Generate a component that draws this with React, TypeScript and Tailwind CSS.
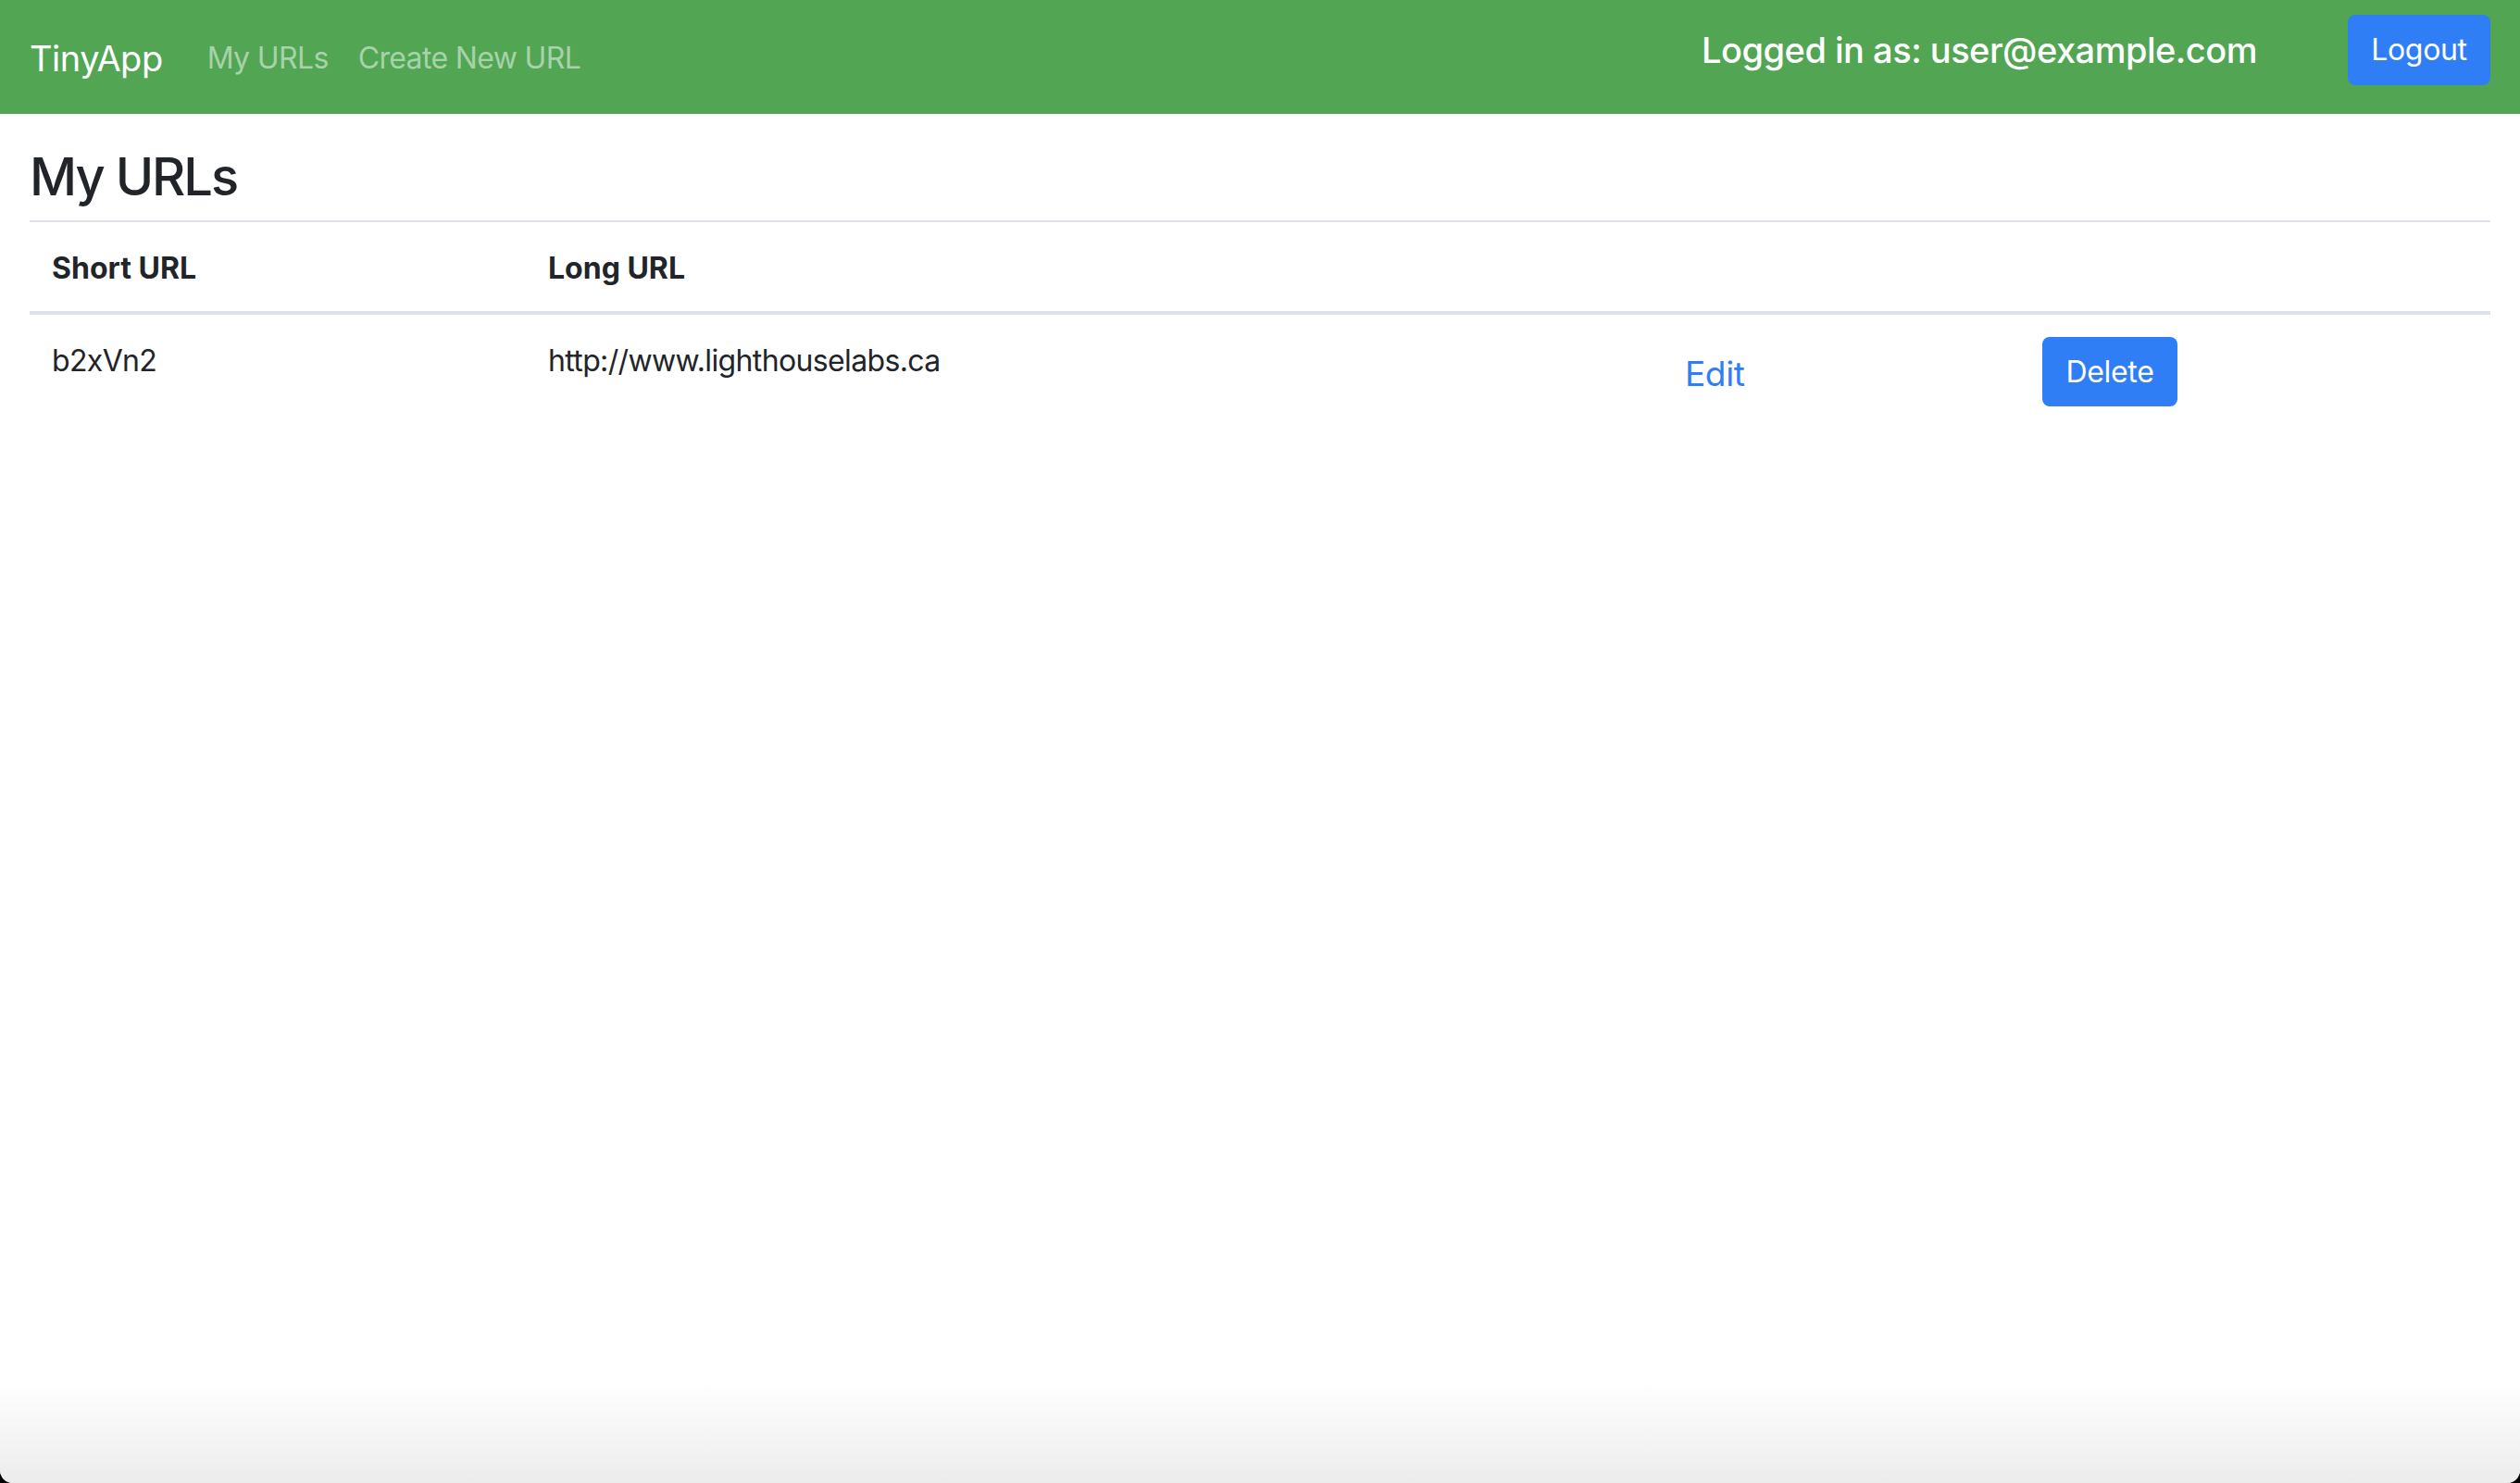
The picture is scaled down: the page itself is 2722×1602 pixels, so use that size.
const URLS = [{ short: "b2xVn2", long: "http://www.lighthouselabs.ca" }];

export default function App() {
  return (
    <div className="min-h-screen flex flex-col bg-black font-['Inter','Liberation_Sans',sans-serif] text-[#212529]">
      <div className="flex-1 flex flex-col bg-white rounded-b-[14px] overflow-hidden">
        {/* Navbar */}
        <nav className="h-[123px] shrink-0 bg-[#51a553] px-8 flex items-center justify-between">
          <div className="flex items-center mt-[3px]">
            <a href="#" className="text-white text-[38px] leading-none tracking-[-0.5px] mr-8">
              TinyApp
            </a>
            <a href="#" className="text-white/50 text-[32px] leading-none tracking-[-0.02em] px-4">
              My URLs
            </a>
            <a href="#" className="text-white/50 text-[32px] leading-none tracking-[-0.02em] px-4">
              Create New URL
            </a>
          </div>
          <div className="flex items-center mb-[15px]">
            <span className="text-white text-[38px] leading-none font-medium tracking-[-0.5px] mr-[98px]">
              Logged in as: user@example.com
            </span>
            <button className="h-[76px] w-[154px] rounded-[8px] bg-[#2f7ef6] text-white text-[32px] leading-none tracking-[-0.01em] flex items-center justify-center">
              Logout
            </button>
          </div>
        </nav>

        {/* Content */}
        <main className="px-8">
          <h1 className="mt-[40px] text-[56px] leading-none font-medium tracking-[-2px]">My URLs</h1>
          <table className="mt-[19px] w-full table-fixed border-collapse text-[32px] leading-[48px]">
            <thead>
              <tr className="border-t-2 border-[#dee2e6]">
                <th className="w-[536px] px-6 pt-[26px] pb-[22px] text-left font-bold border-b-4 border-[#dee2e6]">Short URL</th>
                <th className="w-[1228px] px-6 pt-[26px] pb-[22px] text-left font-bold border-b-4 border-[#dee2e6]">Long URL</th>
                <th className="w-[386px] px-6 pt-[26px] pb-[22px] border-b-4 border-[#dee2e6]"></th>
                <th className="px-6 pt-[26px] pb-[22px] border-b-4 border-[#dee2e6]"></th>
              </tr>
            </thead>
            <tbody className="tracking-[-0.02em]">
              {URLS.map((u) => (
                <tr key={u.short}>
                  <td className="px-6 pt-[26px] pb-6 align-top">{u.short}</td>
                  <td className="px-6 pt-[26px] pb-6 align-top">{u.long}</td>
                  <td className="p-6 align-top">
                    <a href="#" className="block mt-[21px] text-[37px] leading-none tracking-[-0.01em] text-[#2f7ef6]">
                      Edit
                    </a>
                  </td>
                  <td className="p-6 align-top">
                    <button className="h-[75px] w-[146px] rounded-[8px] bg-[#2f7ef6] text-white text-[32px] leading-none tracking-[-0.01em] flex items-center justify-center">
                      Delete
                    </button>
                  </td>
                </tr>
              ))}
            </tbody>
          </table>
        </main>

        <div className="flex-1" />
        <div className="h-[110px] bg-gradient-to-b from-white to-[#ececec]" />
      </div>
    </div>
  );
}
